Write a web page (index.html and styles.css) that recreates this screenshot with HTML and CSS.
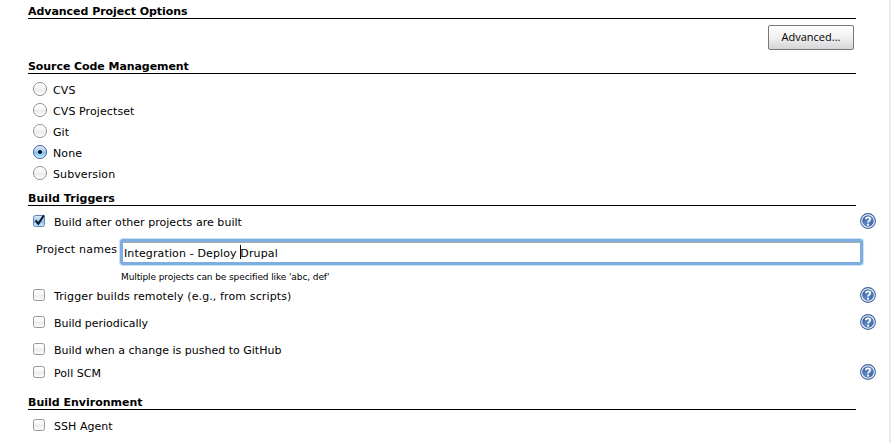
FILE: index.html
```html
<!DOCTYPE html>
<html lang="en">
<head>
<meta charset="utf-8">
<title>Project configuration</title>
<link rel="stylesheet" href="styles.css">
</head>
<body>
<svg class="defs" width="0" height="0" aria-hidden="true">
  <defs>
    <linearGradient id="plain" x2="0" y2="1"><stop offset="0" stop-color="#fff"/><stop offset=".45" stop-color="#f6f6f6"/><stop offset=".5" stop-color="#e9e9e9"/><stop offset="1" stop-color="#fff"/></linearGradient>
    <linearGradient id="blue" x2="0" y2="1"><stop offset="0" stop-color="#dcebfa"/><stop offset=".45" stop-color="#a9cff3"/><stop offset=".5" stop-color="#83bbee"/><stop offset="1" stop-color="#c8f0ff"/></linearGradient>
    <linearGradient id="help-fill" x2="1" y2="1"><stop offset="0" stop-color="#234b8c"/><stop offset=".5" stop-color="#5d88c2"/><stop offset="1" stop-color="#2c579a"/></linearGradient>
    <symbol id="radio" viewBox="0 0 16 16"><circle cx="8" cy="8" r="6.6" fill="url(#plain)" stroke="#969696"/></symbol>
    <symbol id="radio-on" viewBox="0 0 16 16"><circle cx="8" cy="8" r="6.6" fill="url(#blue)" stroke="#5471a5"/><circle cx="8" cy="8" r="2.1" fill="#071426"/></symbol>
    <symbol id="check" viewBox="0 0 16 16"><rect x="1.5" y="2.5" width="11" height="11" rx="2" fill="url(#plain)" stroke="#999"/></symbol>
    <symbol id="check-on" viewBox="0 0 16 16"><rect x="1.5" y="2.5" width="11" height="11" rx="2" fill="url(#blue)" stroke="#6382b4"/><path d="M3.6 7.3 6.3 10.8 12 2.2" fill="none" stroke="#071426" stroke-width="2"/></symbol>
    <symbol id="help" viewBox="0 0 16 16"><circle cx="8" cy="8" r="7.4" fill="#fff" stroke="#3c63a2" stroke-width="1.1"/><circle cx="8" cy="8" r="5.8" fill="url(#help-fill)"/><path d="M5.8 6.3C5.9 3.7 10.3 3.7 10.2 6.2 10.1 7.6 8.1 7.7 8.1 9.5" fill="none" stroke="#fff" stroke-width="1.7"/><circle cx="8.1" cy="11.7" r="1.1" fill="#fff"/></symbol>
  </defs>
</svg>
<main class="page">
  <section class="options">
    <h2><span>Advanced Project Options</span></h2>
    <div class="actions"><button type="button">Advanced...</button></div>
  </section>
  <section class="scm">
    <h2><span>Source Code Management</span></h2>
    <div class="radios">
      <label><svg><use href="#radio"/></svg><span>CVS</span></label>
      <label><svg><use href="#radio"/></svg><span>CVS Projectset</span></label>
      <label><svg><use href="#radio"/></svg><span>Git</span></label>
      <label><svg><use href="#radio-on"/></svg><span>None</span></label>
      <label><svg><use href="#radio"/></svg><span>Subversion</span></label>
    </div>
  </section>
  <section class="triggers">
    <h2><span>Build Triggers</span></h2>
    <div class="row first"><svg><use href="#check-on"/></svg><span>Build after other projects are built</span><svg class="help"><use href="#help"/></svg></div>
    <div class="field"><span class="name">Project names</span>
      <div class="input"><span>Integration - Deploy </span><i class="caret"></i><span>Drupal</span></div>
    </div>
    <p class="hint"><span>Multiple projects can be specified like 'abc, def'</span></p>
    <div class="row remote"><svg><use href="#check"/></svg><span>Trigger builds remotely (e.g., from scripts)</span><svg class="help"><use href="#help"/></svg></div>
    <div class="row periodic"><svg><use href="#check"/></svg><span>Build periodically</span><svg class="help"><use href="#help"/></svg></div>
    <div class="row github"><svg><use href="#check"/></svg><span>Build when a change is pushed to GitHub</span></div>
    <div class="row poll"><svg><use href="#check"/></svg><span>Poll SCM</span><svg class="help"><use href="#help"/></svg></div>
  </section>
  <section class="environment">
    <h2><span>Build Environment</span></h2>
    <div class="row last"><svg><use href="#check"/></svg><span>SSH Agent</span></div>
  </section>
</main>
</body>
</html>
```
FILE: styles.css
```css
* { box-sizing: border-box; }
body { margin: 0; background: #fff; color: #000; font: 11px/14px "DejaVu Sans", Verdana, sans-serif; overflow: hidden; }
.defs { display: block; height: 0; }
.page { width: 891px; height: 443px; padding-left: 28px; border-right: 2px solid #ececec; }
h2 { width: 828px; margin: 0; border-bottom: 1px solid #000; font-size: 11px; font-weight: bold; line-height: 12px; display: flex; align-items: flex-end; letter-spacing: -.04px; white-space: nowrap; }
.options h2 { height: 19px; }
.scm h2 { height: 22px; letter-spacing: -.07px; }
.triggers h2 { height: 22px; letter-spacing: .06px; }
.environment h2 { height: 29px; letter-spacing: 0; }
.actions { width: 828px; height: 33px; padding: 6px 2px 0 0; display: flex; justify-content: flex-end; }
button { width: 86px; height: 25px; padding: 0 0 2px; border: 1px solid #777; border-radius: 2px; background: linear-gradient(#fff, #f1f1f1 50%, #d5d5d8); color: #000; font: 11px/14px "Open Sans", "Lucida Grande", sans-serif; }
.radios { padding-top: 5px; height: 110px; }
.radios label { display: flex; align-items: flex-start; height: 21px; padding-left: 4px; }
.row svg, .radios svg { width: 16px; height: 16px; flex: none; }
.radios svg { margin-top: 2px; }
.radios span { margin: 5px 0 0 5px; letter-spacing: .1px; }
.row { display: flex; align-items: center; width: 848px; padding-left: 4px; white-space: nowrap; }
.row span { margin: 4px 0 0 6px; letter-spacing: .04px; }
.row .help { margin-left: auto; }
.row.first { height: 30px; }
.row.remote { height: 28px; }
.row.remote span { letter-spacing: .12px; }
.row.periodic { height: 26px; }
.row.periodic span { letter-spacing: -.04px; }
.row.github { height: 28px; }
.row.github span { letter-spacing: 0; }
.row.poll { height: 18px; }
.row.last { height: 30px; }
.field { display: flex; height: 31px; padding: 3px 0 0 8px; }
.name { width: 84px; padding-top: 4px; letter-spacing: .24px; white-space: nowrap; }
.input { display: flex; align-items: center; width: 743px; height: 26px; padding-left: 1px; border: 3px solid #7eaee0; border-radius: 3px; box-shadow: inset 0 1px #aaa, 0 0 1px 1px #c5dff8; white-space: pre; letter-spacing: .13px; }
.input span { padding-top: 3px; }
.caret { width: 1px; height: 14px; margin: 0 -1px 0 0; background: #000; }
.hint { height: 14px; margin: 0; padding: 4px 0 0 93px; font-size: 9px; line-height: 12px; letter-spacing: -.1px; white-space: nowrap; }
```
